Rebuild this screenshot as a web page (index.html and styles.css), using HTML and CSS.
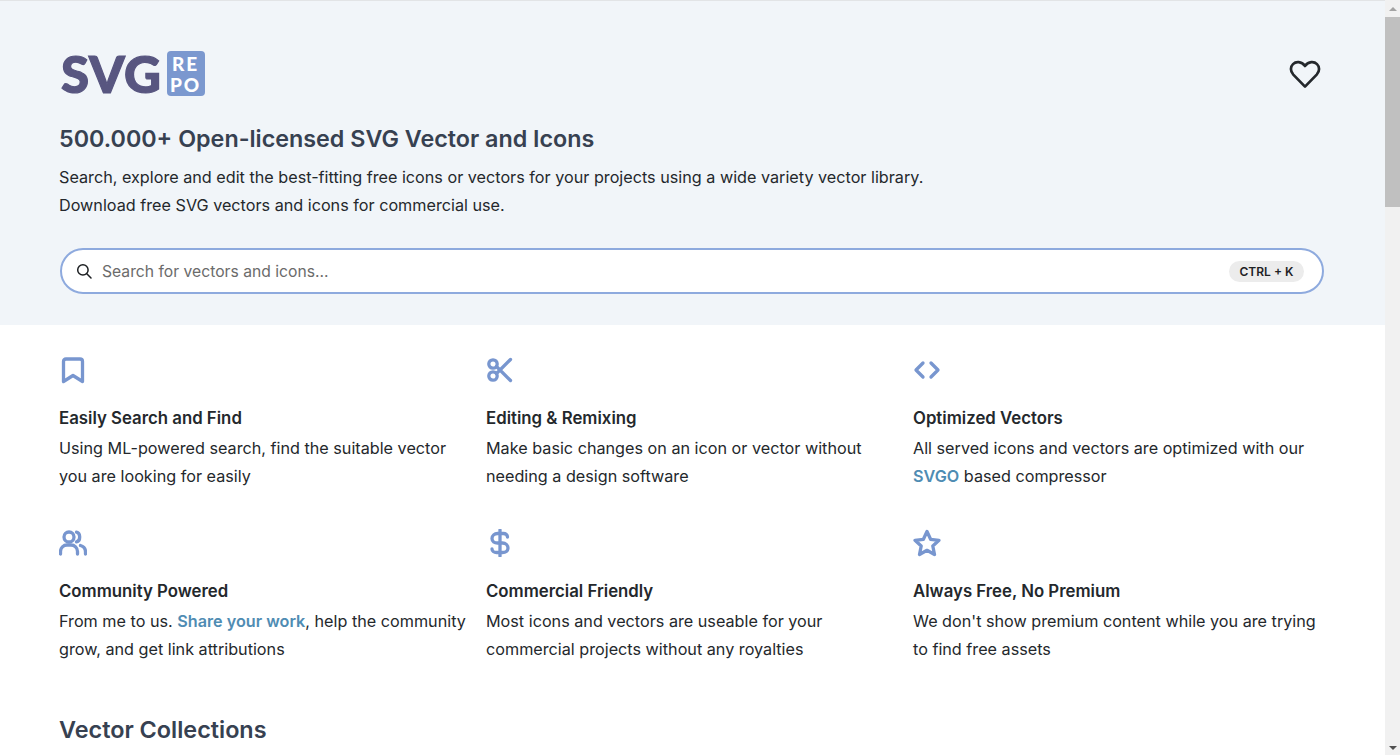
FILE: index.html
```html
<!DOCTYPE html>
<html lang="en">
<head>
<meta charset="utf-8">
<title>SVG Repo</title>
<link rel="stylesheet" href="styles.css">
</head>
<body>
<div class="page">
  <header class="hero">
    <div class="hero-top">
      <a class="logo" href="#">
        <span class="logo-svg">SVG</span>
        <span class="logo-box"><span>RE</span><span>PO</span></span>
      </a>
      <svg class="heart" viewBox="0 0 32 32" fill="none" stroke="#24282c" stroke-width="2.7" stroke-linejoin="round" stroke-linecap="round"><path d="M16 28.6 4.3 16.6C1 13 1.4 8.6 4 6.1 7 3.2 12.400 3.300 16 8 19.600 3.300 25 3.200 28 6.100 30.600 8.600 31 13 27.700 16.600Z"/></svg>
    </div>
    <h1 class="hero-title">500.000+ Open-licensed SVG Vector and Icons</h1>
    <p class="hero-text">Search, explore and edit the best-fitting free icons or vectors for your projects using a wide variety vector library.</p>
    <p class="hero-text">Download free SVG vectors and icons for commercial use.</p>
    <div class="search">
      <svg class="search-icon" viewBox="0 0 16 16" fill="none" stroke="#1c1f22" stroke-width="1.5" stroke-linecap="round"><circle cx="6.900" cy="6.900" r="5.200"/><path d="M10.800 10.800 15 15"/></svg>
      <span class="search-placeholder">Search for vectors and icons...</span>
      <span class="kbd">CTRL + K</span>
    </div>
  </header>
  <main class="content">
    <section class="features">
      <article class="feature">
        <svg class="ficon" viewBox="0 0 28 28"><path d="M4.500 5.500Q4.500 3 7 3h14q2.500 0 2.500 2.500V25.500L14 19.500 4.500 25.500Z"/></svg>
        <h3>Easily Search and Find</h3>
        <p>Using ML-powered search, find the suitable vector you are looking for easily</p>
      </article>
      <article class="feature">
        <svg class="ficon" viewBox="0 0 28 28"><circle cx="7" cy="8" r="4.200"/><circle cx="7" cy="20" r="4.200"/><path d="M10.500 10.500 24.500 24.500M10.500 17.500 24.500 3.500"/></svg>
        <h3>Editing &amp; Remixing</h3>
        <p>Make basic changes on an icon or vector without needing a design software</p>
      </article>
      <article class="feature">
        <svg class="ficon" viewBox="0 0 28 28"><path d="M10 7 3 14l7 7M18 7l7 7-7 7"/></svg>
        <h3>Optimized Vectors</h3>
        <p>All served icons and vectors are optimized with our <a href="#">SVGO</a> based compressor</p>
      </article>
      <article class="feature">
        <svg class="ficon" viewBox="0 0 28 28"><circle cx="10" cy="8" r="5"/><path d="M1.500 25v-2.500c0-3.500 3-6.500 6.500-6.500h4c3.500 0 6.500 3 6.500 6.500V25M17.500 3.200c4 .6 4.500 8.500 0 9.600M21.500 16.500c3 .8 5 3.300 5 6.500v2"/></svg>
        <h3>Community Powered</h3>
        <p>From me to us. <a href="#">Share your work</a>, help the community grow, and get link attributions</p>
      </article>
      <article class="feature">
        <svg class="ficon" viewBox="0 0 28 28"><path d="M14 1v26M21.500 8c0-2.500-2-3.500-4-3.500h-6C8.500 4.500 6 6.500 6 9.500s2.500 4.500 5.500 4.500h5c3 0 5.500 2 5.500 5s-2.500 4.500-5.500 4.500h-6c-2.500 0-4.500-1.500-4.500-3.500"/></svg>
        <h3>Commercial Friendly</h3>
        <p>Most icons and vectors are useable for your commercial projects without any royalties</p>
      </article>
      <article class="feature">
        <svg class="ficon" viewBox="0 0 28 28"><path d="M14 2.500 17.600 10.300 26 11.300 19.800 17 21.500 25.500 14 21.300 6.500 25.500 8.200 17 2 11.300 10.400 10.300Z"/></svg>
        <h3>Always Free, No Premium</h3>
        <p>We don't show premium content while you are trying to find free assets</p>
      </article>
    </section>
    <h2 class="collections">Vector Collections</h2>
  </main>
</div>
<div class="scrollbar">
  <span class="arrow-up"></span>
  <span class="thumb"></span>
  <span class="arrow-down"></span>
</div>
</body>
</html>
```

FILE: styles.css
```css
* { box-sizing: border-box; }
html, body { margin: 0; height: 100%; overflow: hidden; background: #fff; }
body { font-family: Inter, "Liberation Sans", sans-serif; color: #24282c; display: flex; }
a { text-decoration: none; }
.page { flex: 1; min-width: 0; }
.hero { height: 325px; background: #f1f5f9; border-top: 1px solid #e2e4e6; padding: 46px 59px 0; }
.hero-top { display: flex; justify-content: space-between; align-items: flex-start; height: 68px; }
.logo { display: flex; align-items: flex-start; gap: 5px; margin-left: 2px; }
.logo-svg { font-family: Lato, sans-serif; font-weight: 900; font-size: 51px; line-height: 54px; letter-spacing: .6px; color: #585680; -webkit-text-stroke: 1.2px #585680; }
.logo-box { width: 38px; height: 45px; margin-top: 4px; background: #7b98cf; border-radius: 4px; display: flex; flex-direction: column; align-items: center; justify-content: center; font-family: Lato, sans-serif; font-weight: 900; font-size: 19px; line-height: 21px; letter-spacing: 2px; color: #fff; }
.heart { width: 32px; height: 32px; margin: 11px 5px 0 0; }
.hero-title { margin: 9px 0 9px; font-size: 23.300px; line-height: 30px; font-weight: 600; color: #374151; }
.hero-text { margin: 0; font-size: 16.200px; line-height: 28px; color: #24282c; }
.search { margin: 29px 0 0 1px; width: 1264px; height: 46px; display: flex; align-items: center; background: #fff; border: 2px solid #8eaade; border-radius: 23px; padding: 0 18px 0 14px; }
.search-icon { width: 16px; height: 16px; flex: none; }
.search-placeholder { margin-left: 10px; flex: 1; font-size: 15.700px; color: #6b6b6b; }
.kbd { height: 21px; width: 75px; text-align: center; border-radius: 11px; background: #ececec; font-size: 12px; font-weight: 600; line-height: 21px; color: #1f2225; }
.content { padding: 0 59px; }
.features { display: grid; grid-template-columns: repeat(3, 411px); column-gap: 16px; row-gap: 0; padding-top: 31px; }
.feature { height: 173px; }
.ficon { display: block; width: 28px; height: 28px; fill: none; stroke: #7896cf; stroke-width: 3.300; stroke-linecap: round; stroke-linejoin: round; }
.feature h3 { margin: 22px 0 4px; font-size: 16.800px; line-height: 24px; font-weight: 600; color: #24282c; }
.feature p { margin: 0; font-size: 16.200px; line-height: 28px; color: #24282c; }
.feature a { font-weight: 600; color: #4f8cb3; }
.collections { margin: 13px 0 0; font-size: 23.400px; line-height: 30px; font-weight: 600; color: #374151; }
.scrollbar { flex: none; width: 15px; height: 755px; background: #f1f1f1; display: flex; flex-direction: column; align-items: center; }
.arrow-up { margin: 7px 0 4px; border: 4px solid transparent; border-top: 0; border-bottom: 4px solid #a3a3a3; }
.thumb { width: 15px; height: 190px; margin-top: 2px; background: #c0c0c0; }
.arrow-down { margin-top: auto; margin-bottom: 5px; border: 4px solid transparent; border-bottom: 0; border-top: 4px solid #505050; }
```
